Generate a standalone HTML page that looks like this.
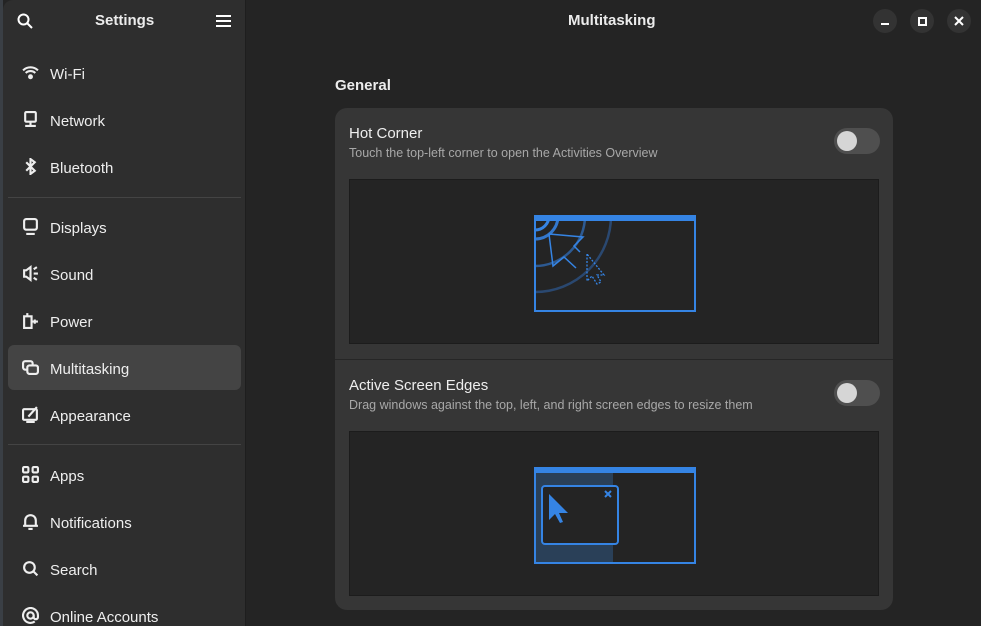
<!DOCTYPE html>
<html><head><style>
*{margin:0;padding:0;box-sizing:border-box}
html,body{width:981px;height:626px;overflow:hidden}
body{background:#242424;font-family:"Liberation Sans","DejaVu Sans",sans-serif;color:#fff;position:relative}
.strip{position:absolute;left:0;top:0;width:3px;height:626px;background:#3a3f45}
.side{position:absolute;left:3px;top:0;width:243px;height:626px;background:#2e2e2e;border-right:1px solid #1e1e1e;border-top-left-radius:10px}
.t{position:absolute;font-size:15px;color:#ececec}
.row{position:absolute;left:5px;width:233px;height:45px;display:flex;align-items:center;padding-left:14px;padding-top:3px;font-size:15px;color:#eee;border-radius:6px}
.row svg{flex:none;width:17px;height:17px;margin-right:11px;margin-top:-3px;fill:none;stroke:#eee;stroke-width:2}
.sep{position:absolute;left:5px;width:233px;height:1px;background:#444}
.wb{position:absolute;top:9px;width:24px;height:24px;border-radius:50%;background:#333;display:flex;align-items:center;justify-content:center}
.card{position:absolute;left:335px;top:108px;width:558px;height:502px;background:#363636;border-radius:12px}
.prev{position:absolute;left:14px;width:530px;height:165px;background:#242424;border:1px solid #1c1c1c}
.tog{position:absolute;left:499px;width:46px;height:26px;border-radius:13px;background:#4f4f4f}
.tog::after{content:"";position:absolute;left:3px;top:3px;width:20px;height:20px;border-radius:50%;background:#d6d6d6}
.h{position:absolute;left:14px;font-size:15px;color:#eee}
.s{position:absolute;left:14px;font-size:12.5px;color:#a8a8a8}
</style></head><body>
<div class="strip"></div>
<div class="side">
 <svg style="position:absolute;left:14px;top:13px" width="16" height="16" viewBox="0 0 16 16" fill="none" stroke="#fff" stroke-width="2"><circle cx="6.5" cy="6.5" r="5"/><path d="M10 10l5 5"/></svg>
 <div class="t" style="left:92px;top:12px;font-weight:bold">Settings</div>
 <svg style="position:absolute;left:213px;top:14px" width="15" height="14" viewBox="0 0 15 14" stroke="#fff" stroke-width="2"><path d="M0 2h15M0 7h15M0 12h15"/></svg>
 <div class="row" style="top:50px"><svg viewBox="0 0 16 16"><path d="M1 6a10 10 0 0 1 14 0M3.5 8.5a6.5 6.5 0 0 1 9 0"/><circle cx="8" cy="12" r="1.3" fill="#eee"/></svg>Wi-Fi</div>
 <div class="row" style="top:97px"><svg viewBox="0 0 16 16"><rect x="3" y="1" width="10" height="9" rx="1"/><path d="M8 10v4M3 14h10"/></svg>Network</div>
 <div class="row" style="top:144px"><svg viewBox="0 0 16 16"><path d="M4 4l8 8-4 3V1l4 3-8 8"/></svg>Bluetooth</div>
 <div class="sep" style="top:197px"></div>
 <div class="row" style="top:204px"><svg viewBox="0 0 16 16"><rect x="2" y="1" width="12" height="10" rx="2"/><path d="M4 15h8"/></svg>Displays</div>
 <div class="row" style="top:251px"><svg viewBox="0 0 16 16"><path d="M2 5h2l4-3v12l-4-3H2zM11 4l3-2M11 8h4M11 12l3 2"/></svg>Sound</div>
 <div class="row" style="top:298px"><svg viewBox="0 0 16 16"><path d="M5 1v2M2 4h7v11H2zM10 9h5M12 7v4"/></svg>Power</div>
 <div class="row" style="top:345px;background:#444"><svg viewBox="0 0 16 16"><rect x="1" y="2" width="9" height="8" rx="2"/><rect x="5" y="6" width="10" height="8" rx="2" fill="#444"/></svg>Multitasking</div>
 <div class="row" style="top:392px"><svg viewBox="0 0 16 16"><rect x="1" y="3" width="13" height="10" rx="1"/><path d="M4 15h8M6 10l8-9"/></svg>Appearance</div>
 <div class="sep" style="top:444px"></div>
 <div class="row" style="top:452px"><svg viewBox="0 0 16 16"><rect x="1" y="1" width="5" height="5" rx="1"/><rect x="10" y="1" width="5" height="5" rx="1"/><rect x="1" y="10" width="5" height="5" rx="1"/><rect x="10" y="10" width="5" height="5" rx="1"/></svg>Apps</div>
 <div class="row" style="top:499px"><svg viewBox="0 0 16 16"><path d="M3 12V7a5 5 0 0 1 10 0v5zM1 12h14M6 15h4"/></svg>Notifications</div>
 <div class="row" style="top:546px"><svg viewBox="0 0 16 16"><circle cx="7" cy="7" r="5"/><path d="M10.5 10.5l4 4"/></svg>Search</div>
 <div class="row" style="top:593px"><svg viewBox="0 0 16 16"><circle cx="8" cy="8" r="3"/><path d="M11 8v1.5a2 2 0 0 0 4 0V8a7 7 0 1 0-3 5.7"/></svg>Online Accounts</div>
</div>
<div class="t" style="left:568px;top:12px;font-weight:bold">Multitasking</div>
<div class="wb" style="left:873px"><div style="width:8px;height:2px;background:#fff;margin-top:5px"></div></div>
<div class="wb" style="left:910px"><div style="width:9px;height:9px;border:2px solid #fff"></div></div>
<div class="wb" style="left:947px"><svg width="10" height="10" viewBox="0 0 10 10" stroke="#fff" stroke-width="2"><path d="M1 1l8 8M9 1l-8 8"/></svg></div>
<div class="t" style="left:335px;top:77px;font-weight:bold">General</div>
<div class="card">
 <div class="h" style="top:17px">Hot Corner</div>
 <div class="s" style="top:38px">Touch the top-left corner to open the Activities Overview</div>
 <div class="tog" style="top:20px"></div>
 <div class="prev" style="top:71px">
  <svg style="position:absolute;left:184px;top:35px" width="162" height="97" viewBox="0 0 162 97">
   <defs><clipPath id="c"><rect x="1" y="1" width="160" height="95"/></clipPath></defs>
   <g clip-path="url(#c)" fill="none">
    <circle cx="1" cy="1" r="76" stroke="#2a4870" stroke-width="2.5"/>
    <circle cx="1" cy="1" r="50" stroke="#2d5a92" stroke-width="2.5"/>
    <circle cx="1" cy="1" r="23" stroke="#3377cc" stroke-width="3"/>
    <circle cx="1" cy="1" r="14" stroke="#3584e4" stroke-width="3"/>
   </g>
   <rect x="1" y="1" width="160" height="95" fill="none" stroke="#3584e4" stroke-width="2"/>
   <rect x="0" y="0" width="162" height="6" fill="#3584e4"/>
   <path d="M15 19l4 32 11-9 12 11M15 19l34 3-9 9 6 6" fill="none" stroke="#3584e4" stroke-width="1.5"/>
   <path d="M53 39v27l5-5 5 8 4-2-4-7h7z" fill="none" stroke="#3584e4" stroke-width="1.3" stroke-dasharray="2 1.5"/>
  </svg>
 </div>
 <div style="position:absolute;left:0;top:251px;width:558px;height:1px;background:#262626"></div>
 <div class="h" style="top:269px">Active Screen Edges</div>
 <div class="s" style="top:290px">Drag windows against the top, left, and right screen edges to resize them</div>
 <div class="tog" style="top:272px"></div>
 <div class="prev" style="top:323px">
  <svg style="position:absolute;left:184px;top:35px" width="162" height="97" viewBox="0 0 162 97">
   <rect x="1" y="6" width="78" height="90" fill="#2a4058"/>
   <rect x="1" y="1" width="160" height="95" fill="none" stroke="#3584e4" stroke-width="2"/>
   <rect x="0" y="0" width="162" height="6" fill="#3584e4"/>
   <rect x="8" y="19" width="76" height="58" rx="3" fill="#242424" stroke="#3584e4" stroke-width="2"/>
   <path d="M71 24l6 6M77 24l-6 6" stroke="#3584e4" stroke-width="2"/>
   <path d="M15 27v26l6-6 5 9 3-1-4-9h9z" fill="#3584e4"/>
  </svg>
 </div>
</div>
</body></html>
